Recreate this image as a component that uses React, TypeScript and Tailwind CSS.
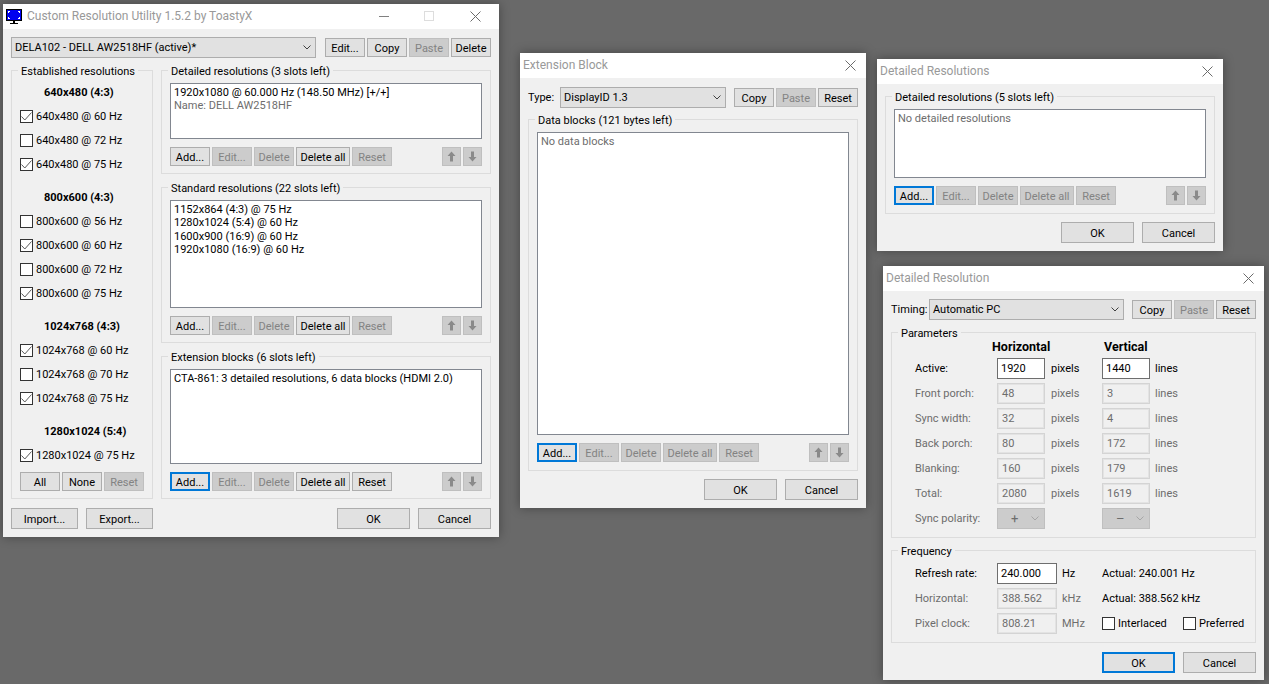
import React from "react"

const Chevron = ({ muted }: { muted?: boolean }) => (
  <svg width="8" height="5" viewBox="0 0 8 5" fill="none" stroke={muted ? "#a6a6a6" : "#404040"} strokeWidth="1">
    <path d="M0.5 0.5 L4 4 L7.5 0.5" />
  </svg>
)

const CloseIcon = () => (
  <svg width="11" height="11" viewBox="0 0 11 11" stroke="#6b6b6b" strokeWidth="1" fill="none">
    <path d="M0.5 0.5 L10.5 10.5 M10.5 0.5 L0.5 10.5" />
  </svg>
)

const AppIcon = () => (
  <svg width="16" height="15" viewBox="0 0 16 15" className="shrink-0">
    <rect x="0" y="0" width="16" height="12" fill="#000" />
    <rect x="1" y="1" width="14" height="10" fill="#0000f0" />
    <path d="M2 2h2v1h-1v1h-1z M12 2h2v2h-1v-1h-1z M2 8h1v1h1v1h-2z M13 8h1v2h-2v-1h1z" fill="#fff" />
    <rect x="7" y="12" width="2" height="2" fill="#000" />
    <rect x="4" y="14" width="8" height="1" fill="#000" />
  </svg>
)

const Arrow = ({ down }: { down?: boolean }) => (
  <svg width="9" height="11" viewBox="0 0 9 11" fill="#8a8a8a" className={down ? "rotate-180" : ""}>
    <path d="M4.5 0.5 L8.5 5 H6 V10.5 H3 V5 H0.5 Z" />
  </svg>
)

type BtnProps = {
  label?: string
  w: string
  off?: boolean
  main?: boolean
  tall?: boolean
  children?: React.ReactNode
}

const Btn = ({ label, w, off, main, tall, children }: BtnProps) => {
  let look = "bg-[#e1e1e1] border border-[#adadad] text-black"
  if (off) look = "bg-[#cccccc] border border-[#bfbfbf] text-[#838383]"
  if (main) look = "bg-[#e1e1e1] border-2 border-[#0078d7] text-black"
  return (
    <div className={`${w} ${tall ? "h-[21px]" : "h-[19px]"} ${look} ${label ? "pt-[2px]" : ""} flex items-center justify-center shrink-0`}>
      {label}
      {children}
    </div>
  )
}

const Combo = ({ text, w }: { text: string; w: string }) => (
  <div className={`${w} h-[21px] bg-[#e1e1e1] border border-[#adadad] flex items-center justify-between pl-[3px] pr-[4px] shrink-0`}>
    <span>{text}</span>
    <Chevron />
  </div>
)

const Group = ({ title, className, children }: { title: string; className: string; children: React.ReactNode }) => (
  <div className={`relative border border-[#dcdcdc] ${className}`}>
    <span className="absolute -top-[7px] left-[6px] bg-[#f0f0f0] px-[3px] leading-[16px] whitespace-nowrap">{title}</span>
    {children}
  </div>
)

const ListBox = ({ h, children }: { h: string; children: React.ReactNode }) => (
  <div className={`${h} bg-white border border-[#828790] px-[3px] pt-[2px] leading-[13.33px]`}>{children}</div>
)

const ActionRow = ({ main, editOff, resetOff, allOff }: { main?: boolean; editOff?: boolean; resetOff?: boolean; allOff?: boolean }) => (
  <div className="flex mt-[8px] gap-[2px]">
    <Btn label="Add..." w="w-[40px]" main={main} />
    <Btn label="Edit..." w="w-[40px]" off={editOff} />
    <Btn label="Delete" w="w-[40px]" off />
    <Btn label="Delete all" w="w-[54px]" off={allOff} />
    <Btn label="Reset" w="w-[40px]" off={resetOff} />
    <div className="flex-1" />
    <Btn w="w-[19px]" off>
      <Arrow />
    </Btn>
    <Btn w="w-[19px]" off>
      <Arrow down />
    </Btn>
  </div>
)

const Check = ({ on }: { on?: boolean }) => (
  <div className="w-[13px] h-[13px] bg-white border border-[#333333] flex items-center justify-center shrink-0">
    {on && (
      <svg width="11" height="9" viewBox="0 0 11 9" fill="none" stroke="#5a5a5a" strokeWidth="1">
        <path d="M0.5 4.5 L3.8 8 L10.5 0.5" />
      </svg>
    )}
  </div>
)

const CheckRow = ({ label, on }: { label: string; on?: boolean }) => (
  <div className="h-[24px] flex items-center gap-[3px] whitespace-nowrap">
    <Check on={on} />
    <span className="pt-[1px]">{label}</span>
  </div>
)

const Heading = ({ label, first }: { label: string; first?: boolean }) => (
  <div className={`h-[24px] flex items-center pl-[24px] pt-[1px] font-bold whitespace-nowrap ${first ? "" : "mt-[9px]"}`}>{label}</div>
)

const Window = ({ title, pos, icon, controls, children }: { title: string; pos: string; icon?: boolean; controls?: boolean; children: React.ReactNode }) => (
  <div className={`absolute ${pos} bg-[#f0f0f0] shadow-[0_0_10px_rgba(0,0,0,0.35)] flex flex-col`}>
    <div className="h-[25px] bg-white flex items-center pl-[3px] pb-[1px] shrink-0">
      {icon && <AppIcon />}
      <span className={`text-[#999999] text-[12px] ${icon ? "ml-[5px]" : ""}`}>{title}</span>
      <div className="flex-1" />
      {controls && (
        <>
          <div className="w-[10px] h-px bg-[#808080] mr-[35px]" />
          <div className="w-[10px] h-[10px] border border-[#dddddd] mr-[36px]" />
        </>
      )}
      <div className={`flex ${controls ? "mr-[18px]" : "mr-[10px]"}`}>
        <CloseIcon />
      </div>
    </div>
    {children}
  </div>
)

const established = [
  { head: "640x480 (4:3)", rows: [["640x480 @ 60 Hz", true], ["640x480 @ 72 Hz", false], ["640x480 @ 75 Hz", true]] },
  { head: "800x600 (4:3)", rows: [["800x600 @ 56 Hz", false], ["800x600 @ 60 Hz", true], ["800x600 @ 72 Hz", false], ["800x600 @ 75 Hz", true]] },
  { head: "1024x768 (4:3)", rows: [["1024x768 @ 60 Hz", true], ["1024x768 @ 70 Hz", false], ["1024x768 @ 75 Hz", true]] },
  { head: "1280x1024 (5:4)", rows: [["1280x1024 @ 75 Hz", true]] },
] as { head: string; rows: [string, boolean][] }[]

const MainWindow = () => (
  <Window title="Custom Resolution Utility 1.5.2 by ToastyX" pos="left-[3px] top-[4px] w-[496px] h-[533px]" icon controls>
    <div className="px-[8px] pt-[8px]">
      <div className="flex items-center">
        <Combo text="DELA102 - DELL AW2518HF (active)*" w="w-[305px]" />
        <div className="flex gap-[2px] ml-[9px]">
          <Btn label="Edit..." w="w-[40px]" />
          <Btn label="Copy" w="w-[40px]" />
          <Btn label="Paste" w="w-[40px]" off />
          <Btn label="Delete" w="w-[40px]" />
        </div>
      </div>
      <div className="flex gap-[8px] mt-[12px]">
        <Group title="Established resolutions" className="w-[142px] h-[429px] pt-[9px] px-[8px]">
          {established.map((g, i) => (
            <div key={g.head}>
              <Heading label={g.head} first={i === 0} />
              {g.rows.map(([label, on]) => (
                <CheckRow key={label} label={label} on={on} />
              ))}
            </div>
          ))}
          <div className="flex gap-[2px] mt-[5px]">
            <Btn label="All" w="w-[40px]" />
            <Btn label="None" w="w-[40px]" />
            <Btn label="Reset" w="w-[40px]" off />
          </div>
        </Group>
        <div className="w-[330px] flex flex-col gap-[13px]">
          <Group title="Detailed resolutions (3 slots left)" className="h-[104px] pt-[12px] px-[8px]">
            <ListBox h="h-[56px]">
              <div>1920x1080 @ 60.000 Hz (148.50 MHz) [+/+]</div>
              <div className="text-[#6d6d6d]">Name: DELL AW2518HF</div>
            </ListBox>
            <ActionRow editOff resetOff allOff={false} />
          </Group>
          <Group title="Standard resolutions (22 slots left)" className="h-[156px] pt-[12px] px-[8px]">
            <ListBox h="h-[108px]">
              <div>1152x864 (4:3) @ 75 Hz</div>
              <div>1280x1024 (5:4) @ 60 Hz</div>
              <div>1600x900 (16:9) @ 60 Hz</div>
              <div>1920x1080 (16:9) @ 60 Hz</div>
            </ListBox>
            <ActionRow editOff resetOff />
          </Group>
          <Group title="Extension blocks (6 slots left)" className="h-[143px] pt-[12px] px-[8px]">
            <ListBox h="h-[95px]">
              <div>CTA-861: 3 detailed resolutions, 6 data blocks (HDMI 2.0)</div>
            </ListBox>
            <ActionRow main editOff />
          </Group>
        </div>
      </div>
      <div className="flex mt-[9px]">
        <Btn label="Import..." w="w-[67px]" tall />
        <div className="w-[8px]" />
        <Btn label="Export..." w="w-[67px]" tall />
        <div className="flex-1" />
        <Btn label="OK" w="w-[73px]" tall />
        <div className="w-[8px]" />
        <Btn label="Cancel" w="w-[73px]" tall />
      </div>
    </div>
  </Window>
)

const ExtensionWindow = () => (
  <Window title="Extension Block" pos="left-[520px] top-[53px] w-[346px] h-[455px]">
    <div className="px-[8px] pt-[9px]">
      <div className="flex items-center">
        <span className="w-[32px]">Type:</span>
        <Combo text="DisplayID 1.3" w="w-[166px]" />
        <div className="flex gap-[2px] ml-[8px]">
          <Btn label="Copy" w="w-[40px]" />
          <Btn label="Paste" w="w-[40px]" off />
          <Btn label="Reset" w="w-[40px]" />
        </div>
      </div>
      <Group title="Data blocks (121 bytes left)" className="h-[352px] mt-[11px] pt-[12px] px-[8px]">
        <ListBox h="h-[303px]">
          <div className="text-[#6d6d6d]">No data blocks</div>
        </ListBox>
        <ActionRow main editOff resetOff allOff />
      </Group>
      <div className="flex justify-end gap-[8px] mt-[8px]">
        <Btn label="OK" w="w-[73px]" tall />
        <Btn label="Cancel" w="w-[73px]" tall />
      </div>
    </div>
  </Window>
)

const DetailedListWindow = () => (
  <Window title="Detailed Resolutions" pos="left-[877px] top-[59px] w-[346px] h-[192px]">
    <div className="px-[8px] pt-[12px]">
      <Group title="Detailed resolutions (5 slots left)" className="h-[118px] pt-[12px] px-[8px]">
        <ListBox h="h-[69px]">
          <div className="text-[#6d6d6d]">No detailed resolutions</div>
        </ListBox>
        <ActionRow main editOff resetOff allOff />
      </Group>
      <div className="flex justify-end gap-[8px] mt-[8px]">
        <Btn label="OK" w="w-[73px]" tall />
        <Btn label="Cancel" w="w-[73px]" tall />
      </div>
    </div>
  </Window>
)

const Field = ({ value, w, live }: { value: string; w: string; live?: boolean }) => (
  <div
    className={`${w} h-[21px] flex items-center pl-[3px] shrink-0 ${
      live ? "bg-white border border-[#6e6e6e] text-black" : "bg-[#f0f0f0] border-2 border-[#e3e3e3] outline outline-1 -outline-offset-1 outline-[#d4d4d4] text-[#6d6d6d]"
    }`}
  >
    {value}
  </div>
)

const timing: [string, string, string][] = [
  ["Front porch:", "48", "3"],
  ["Sync width:", "32", "4"],
  ["Back porch:", "80", "172"],
  ["Blanking:", "160", "179"],
  ["Total:", "2080", "1619"],
]

const PolarityBox = ({ sign }: { sign: string }) => (
  <div className="w-[48px] h-[21px] bg-[#cccccc] border border-[#bfbfbf] flex items-center justify-between pl-[13px] pr-[5px] text-[#6d6d6d] text-[13px] shrink-0">
    <span>{sign}</span>
    <Chevron muted />
  </div>
)

const ResolutionWindow = () => (
  <Window title="Detailed Resolution" pos="left-[883px] top-[266px] w-[381px] h-[414px]">
    <div className="px-[8px] pt-[8px]">
      <div className="flex items-center">
        <span className="w-[38px]">Timing:</span>
        <Combo text="Automatic PC" w="w-[195px]" />
        <div className="flex gap-[2px] ml-[8px]">
          <Btn label="Copy" w="w-[40px]" />
          <Btn label="Paste" w="w-[40px]" off />
          <Btn label="Reset" w="w-[40px]" />
        </div>
      </div>
      <Group title="Parameters" className="h-[206px] mt-[12px] pt-[6px] pl-[23px]">
        <div className="flex h-[16px] mb-[3px] items-center font-bold text-[12.5px]">
          <span className="w-[112px] ml-[77px]">Horizontal</span>
          <span>Vertical</span>
        </div>
        <div className="flex flex-col gap-[4px]">
          <div className="flex items-center">
            <span className="w-[82px]">Active:</span>
            <Field value="1920" w="w-[48px]" live />
            <span className="w-[57px] pl-[6px]">pixels</span>
            <Field value="1440" w="w-[48px]" live />
            <span className="pl-[5px]">lines</span>
          </div>
          {timing.map(([label, h, v]) => (
            <div key={label} className="flex items-center text-[#6d6d6d]">
              <span className="w-[82px]">{label}</span>
              <Field value={h} w="w-[48px]" />
              <span className="w-[57px] pl-[6px]">pixels</span>
              <Field value={v} w="w-[48px]" />
              <span className="pl-[5px]">lines</span>
            </div>
          ))}
          <div className="flex items-center text-[#6d6d6d]">
            <span className="w-[82px]">Sync polarity:</span>
            <PolarityBox sign="+" />
            <span className="w-[57px]" />
            <PolarityBox sign="–" />
          </div>
        </div>
      </Group>
      <Group title="Frequency" className="h-[93px] mt-[12px] pt-[12px] pl-[23px]">
        <div className="flex flex-col gap-[4px]">
          <div className="flex items-center">
            <span className="w-[82px]">Refresh rate:</span>
            <Field value="240.000" w="w-[60px]" live />
            <span className="w-[45px] pl-[5px]">Hz</span>
            <span>Actual: 240.001 Hz</span>
          </div>
          <div className="flex items-center">
            <span className="w-[82px] text-[#6d6d6d]">Horizontal:</span>
            <Field value="388.562" w="w-[60px]" />
            <span className="w-[45px] pl-[5px] text-[#6d6d6d]">kHz</span>
            <span>Actual: 388.562 kHz</span>
          </div>
          <div className="flex items-center">
            <span className="w-[82px] text-[#6d6d6d]">Pixel clock:</span>
            <Field value="808.21" w="w-[60px]" />
            <span className="w-[45px] pl-[5px] text-[#6d6d6d]">MHz</span>
            <div className="flex items-center gap-[3px] w-[81px]">
              <Check />
              <span>Interlaced</span>
            </div>
            <div className="flex items-center gap-[3px]">
              <Check />
              <span>Preferred</span>
            </div>
          </div>
        </div>
      </Group>
      <div className="flex justify-end gap-[8px] mt-[9px]">
        <Btn label="OK" w="w-[73px]" tall main />
        <Btn label="Cancel" w="w-[73px]" tall />
      </div>
    </div>
  </Window>
)

export default function App() {
  return (
    <div className="relative w-[1269px] h-[684px] overflow-hidden bg-[#696969] font-['Roboto','Noto_Sans',sans-serif] text-[11px] leading-[16px] text-black">
      <MainWindow />
      <ExtensionWindow />
      <DetailedListWindow />
      <ResolutionWindow />
    </div>
  )
}
